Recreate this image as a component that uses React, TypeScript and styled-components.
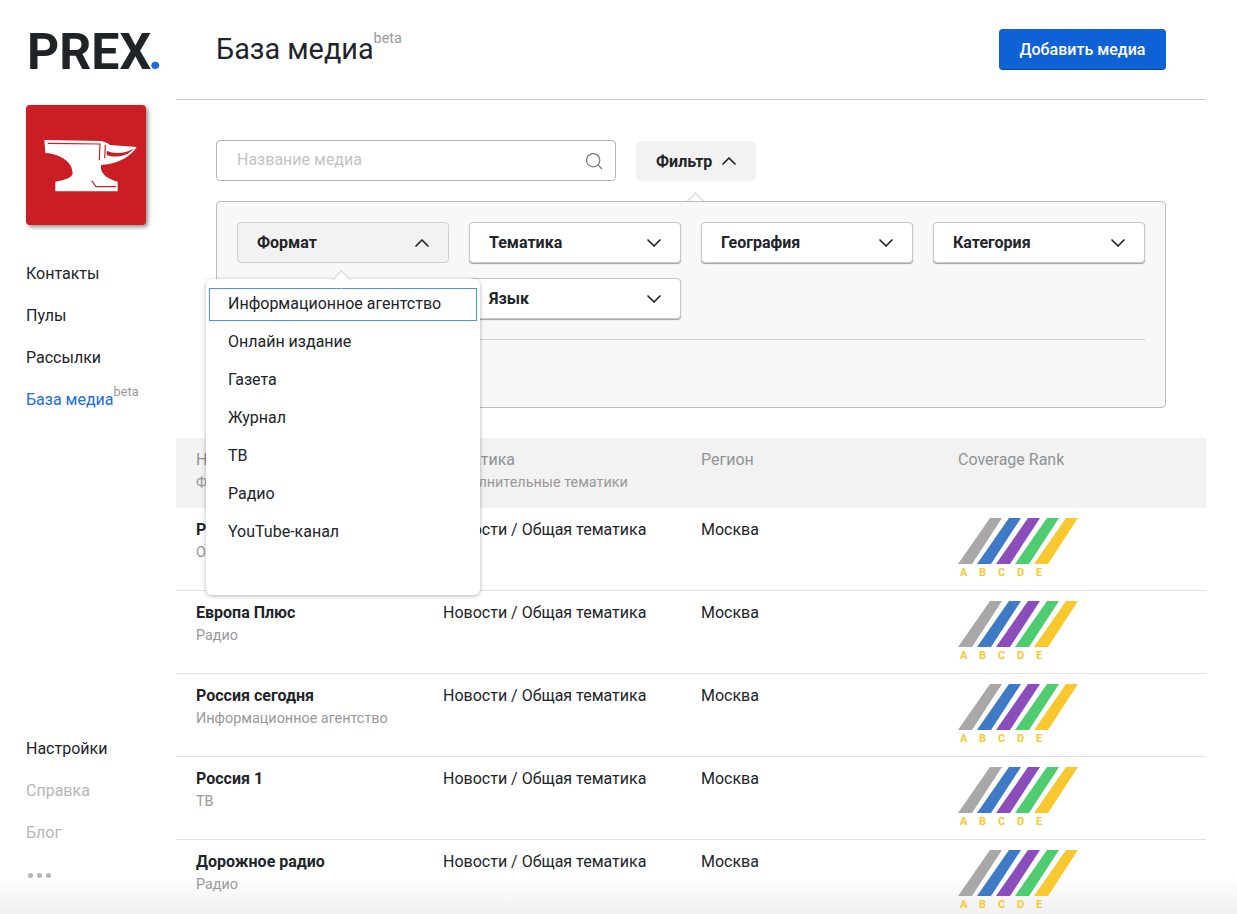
import React from 'react';
import styled, { createGlobalStyle } from 'styled-components';
import { ChevronDown, ChevronUp, Search } from 'lucide-react';

const GlobalStyle = createGlobalStyle`
  html, body {
    margin: 0;
    padding: 0;
    background: #fff;
    font-family: Roboto, "Liberation Sans", sans-serif;
    color: #212529;
  }
  * { box-sizing: border-box; }
`;

const Page = styled.div`
  display: grid;
  grid-template-columns: 176px 1030px;
  width: 1237px;
  height: 914px;
  overflow: hidden;
  background: linear-gradient(rgba(240, 240, 240, 0) 878px, #f0f0f0 914px);
`;

const Sidebar = styled.aside`
  display: flex;
  flex-direction: column;
  padding: 0 0 0 26px;
`;

const Logo = styled.div`
  height: 105px;
  padding: 21px 0 0 1px;
  font-size: 50px;
  line-height: 62px;
  font-weight: 700;
  color: #1f2326;
  span { color: #1a6ce0; margin-left: -3px; }
`;

const Avatar = styled.div`
  display: flex;
  width: 120px;
  height: 120px;
  border-radius: 4px;
  background: #cb1e24;
  box-shadow: 2px 2px 4px rgba(0, 0, 0, 0.45);
`;

const NavGroup = styled.nav<{ $bottom?: boolean }>`
  display: flex;
  flex-direction: column;
  gap: 18px;
  margin-top: ${(p) => (p.$bottom ? 'auto' : '37px')};
  padding-bottom: ${(p) => (p.$bottom ? '36px' : '0')};
`;

const NavItem = styled.div<{ $tone?: 'active' | 'muted' }>`
  height: 24px;
  font-size: 16px;
  line-height: 24px;
  white-space: nowrap;
  color: ${(p) => (p.$tone === 'active' ? '#1a6ce0' : p.$tone === 'muted' ? '#b4b6b8' : '#212529')};
`;

const Beta = styled.sup<{ $big?: boolean }>`
  font-size: ${(p) => (p.$big ? '14.4px' : '12.8px')};
  line-height: 0;
  color: #999;
  vertical-align: baseline;
  position: relative;
  top: ${(p) => (p.$big ? '-16px' : '-9px')};
`;

const Dots = styled.div`
  display: flex;
  gap: 4px;
  height: 24px;
  padding: 10px 0 0 2px;
  i {
    width: 5px;
    height: 5px;
    border-radius: 50%;
    background: #b4b6b8;
  }
`;

const Main = styled.main`
  display: flex;
  flex-direction: column;
`;

const Header = styled.header`
  display: flex;
  justify-content: space-between;
  align-items: flex-start;
  height: 100px;
  padding: 29px 40px 0;
  border-bottom: 1px solid #c8c8c8;
`;

const Title = styled.h1`
  margin: 0;
  font-size: 28.8px;
  line-height: 41px;
  font-weight: 400;
  color: #212529;
`;

const AddButton = styled.button`
  width: 167px;
  height: 41px;
  padding: 0;
  border: none;
  border-radius: 4px;
  background: #0f62d6;
  box-shadow: inset 0 -1px 0 rgba(0, 0, 0, 0.25);
  color: #fff;
  font: 500 16px Roboto, sans-serif;
`;

const Controls = styled.div`
  display: flex;
  flex-direction: column;
  padding: 40px 40px 30px;
  gap: 20px;
`;

const SearchRow = styled.div`
  display: flex;
  gap: 20px;
`;

const SearchBox = styled.div`
  display: flex;
  align-items: center;
  justify-content: space-between;
  width: 400px;
  height: 41px;
  padding: 0 11px 2px 20px;
  border: 1px solid #b4b6b8;
  border-radius: 4px;
  font-size: 16px;
  color: #c4c4c4;
  svg { color: #777; margin-top: 2px; }
`;

const FilterButton = styled.div`
  position: relative;
  display: flex;
  align-items: center;
  gap: 5px;
  width: 120px;
  height: 40px;
  margin-top: 1px;
  padding-left: 20px;
  border-radius: 4px;
  background: #f2f2f2;
  font-size: 16px;
  font-weight: 700;
  color: #212529;
`;

const Pointer = styled.div<{ $tone: string; $bottom: number; $left: number }>`
  position: absolute;
  left: ${(p) => p.$left}px;
  bottom: ${(p) => p.$bottom}px;
  width: 13px;
  height: 13px;
  background: ${(p) => p.$tone};
  border-top: 1px solid #d4d4d4;
  border-left: 1px solid #d4d4d4;
  transform: rotate(45deg);
`;

const Panel = styled.section`
  position: relative;
  display: flex;
  flex-direction: column;
  height: 207px;
  padding: 20px 20px 0;
  border: 1px solid #bdbdbd;
  border-radius: 4px;
  background: #f8f8f8;
`;

const PanelGrid = styled.div`
  display: grid;
  grid-template-columns: repeat(4, 212px);
  grid-auto-rows: 41px;
  gap: 15px 20px;
  padding-bottom: 20px;
  border-bottom: 1px solid #d0d0d0;
`;

const FieldWrap = styled.div`
  position: relative;
`;

const Field = styled.div<{ $open?: boolean }>`
  display: flex;
  align-items: center;
  justify-content: space-between;
  height: 41px;
  padding: 0 14px 0 19px;
  border: 1px solid ${(p) => (p.$open ? '#cfcfcf' : '#c8c8c8')};
  border-radius: 4px;
  background: ${(p) => (p.$open ? '#f2f2f2' : '#fff')};
  box-shadow: ${(p) => (p.$open ? 'none' : '0 1px 1px rgba(0, 0, 0, 0.35)')};
  font-size: 16px;
  font-weight: 700;
  color: #212529;
`;

const Menu = styled.div`
  position: absolute;
  top: 57px;
  left: -31px;
  z-index: 4;
  display: flex;
  flex-direction: column;
  gap: 5px;
  width: 274px;
  height: 316px;
  padding: 9px 3px 0;
  border-radius: 6px;
  background: #fff;
  box-shadow: 0 1px 4px rgba(0, 0, 0, 0.3);
`;

const MenuItem = styled.div<{ $selected?: boolean }>`
  height: 33px;
  padding: 0 18px;
  border: 1px solid ${(p) => (p.$selected ? '#3f97f5' : 'transparent')};
  font-size: 16px;
  line-height: 29px;
  color: #212529;
  white-space: nowrap;
`;

const Table = styled.div`
  display: flex;
  flex-direction: column;
`;

const HeadRow = styled.div`
  display: grid;
  grid-template-columns: 247px 258px 257px 1fr;
  height: 70px;
  padding: 11px 0 0 20px;
  background: #f2f2f2;
`;

const Row = styled.div`
  display: grid;
  grid-template-columns: 247px 258px 257px 1fr;
  flex: none;
  height: 83px;
  padding: 11px 0 0 20px;
  border-bottom: 1px solid #e0e0e0;
`;

const HeadTitle = styled.div`
  font-size: 16px;
  line-height: 22px;
  color: #8f9295;
`;

const SubText = styled.div`
  font-size: 14.4px;
  line-height: 24px;
  color: #999;
`;

const MediaName = styled.div`
  font-size: 16px;
  line-height: 22px;
  font-weight: 700;
  color: #212529;
`;

const CellText = styled.div`
  font-size: 16px;
  line-height: 22px;
  color: #212529;
`;

const RankWrap = styled.div`
  display: flex;
  flex-direction: column;
  gap: 2px;
  margin-top: -1px;
`;

const RankLetters = styled.div`
  display: grid;
  grid-template-columns: repeat(5, 19px);
  padding-left: 2px;
  font-size: 11px;
  line-height: 13px;
  font-weight: 700;
  color: #f9c82e;
`;

const bars = ['#a9a7a7', '#3f7ac6', '#8a4dbb', '#4fcb70', '#f9c82e'];

const Rank = () => (
  <RankWrap>
    <svg width="121" height="46" viewBox="0 0 121 46">
      {bars.map((color, i) => {
        const x = i * 19;
        return <polygon key={color} fill={color} points={`${x},46 ${x + 14},46 ${x + 44},0 ${x + 32},0`} />;
      })}
    </svg>
    <RankLetters>
      {['A', 'B', 'C', 'D', 'E'].map((l) => (
        <span key={l}>{l}</span>
      ))}
    </RankLetters>
  </RankWrap>
);

const Anvil = () => (
  <svg width="120" height="120" viewBox="0 0 360 360">
    <path
      fill="#fff"
      d="M55 105 L227 108 L245 115 L252 120 L332 126 C318 150 280 178 225 180 C222 200 235 220 275 230 L275 259 L88 259 L88 230 C120 225 138 218 140 205 C140 175 110 148 58 144 Z"
    />
    <path
      fill="none"
      stroke="#cb1e24"
      strokeWidth="3.5"
      d="M65 115 L222 117 L220 166 M238 120 L236 160 M197 227 L210 245 L270 245"
    />
    <path fill="#cb1e24" d="M242 137 C265 148 300 145 322 131 C305 155 265 160 242 150 Z" />
  </svg>
);

const formats = ['Информационное агентство', 'Онлайн издание', 'Газета', 'Журнал', 'ТВ', 'Радио', 'YouTube-канал'];

const rows = [
  { name: 'РИА Новости', format: 'Онлайн издание' },
  { name: 'Европа Плюс', format: 'Радио' },
  { name: 'Россия сегодня', format: 'Информационное агентство' },
  { name: 'Россия 1', format: 'ТВ' },
  { name: 'Дорожное радио', format: 'Радио' },
];

export default function App() {
  return (
    <>
      <GlobalStyle />
      <Page>
        <Sidebar>
          <Logo>
            PREX<span>.</span>
          </Logo>
          <Avatar>
            <Anvil />
          </Avatar>
          <NavGroup>
            <NavItem>Контакты</NavItem>
            <NavItem>Пулы</NavItem>
            <NavItem>Рассылки</NavItem>
            <NavItem $tone="active">
              База медиа<Beta>beta</Beta>
            </NavItem>
          </NavGroup>
          <NavGroup $bottom>
            <NavItem>Настройки</NavItem>
            <NavItem $tone="muted">Справка</NavItem>
            <NavItem $tone="muted">Блог</NavItem>
            <Dots>
              <i />
              <i />
              <i />
            </Dots>
          </NavGroup>
        </Sidebar>
        <Main>
          <Header>
            <Title>
              База медиа<Beta $big>beta</Beta>
            </Title>
            <AddButton>Добавить медиа</AddButton>
          </Header>
          <Controls>
            <SearchRow>
              <SearchBox>
                Название медиа
                <Search size={20} strokeWidth={1.5} />
              </SearchBox>
              <FilterButton>
                Фильтр
                <ChevronUp size={24} strokeWidth={1.7} />
                <Pointer $tone="#f8f8f8" $bottom={-27} $left={53} />
              </FilterButton>
            </SearchRow>
            <Panel>
              <PanelGrid>
                <FieldWrap>
                  <Field $open>
                    Формат
                    <ChevronUp size={24} strokeWidth={1.7} />
                  </Field>
                  <Menu>
                    <Pointer $tone="#fff" $bottom={309} $left={129} />
                    {formats.map((f, i) => (
                      <MenuItem key={f} $selected={i === 0}>
                        {f}
                      </MenuItem>
                    ))}
                  </Menu>
                </FieldWrap>
                <Field>
                  Тематика
                  <ChevronDown size={24} strokeWidth={1.7} />
                </Field>
                <Field>
                  География
                  <ChevronDown size={24} strokeWidth={1.7} />
                </Field>
                <Field>
                  Категория
                  <ChevronDown size={24} strokeWidth={1.7} />
                </Field>
                <div />
                <Field>
                  Язык
                  <ChevronDown size={24} strokeWidth={1.7} />
                </Field>
              </PanelGrid>
            </Panel>
          </Controls>
          <Table>
            <HeadRow>
              <div>
                <HeadTitle>Название</HeadTitle>
                <SubText>Формат</SubText>
              </div>
              <div>
                <HeadTitle>Тематика</HeadTitle>
                <SubText>Дополнительные тематики</SubText>
              </div>
              <HeadTitle>Регион</HeadTitle>
              <HeadTitle>Coverage Rank</HeadTitle>
            </HeadRow>
            {rows.map((r) => (
              <Row key={r.name}>
                <div>
                  <MediaName>{r.name}</MediaName>
                  <SubText>{r.format}</SubText>
                </div>
                <CellText>Новости / Общая тематика</CellText>
                <CellText>Москва</CellText>
                <Rank />
              </Row>
            ))}
          </Table>
        </Main>
      </Page>
    </>
  );
}
